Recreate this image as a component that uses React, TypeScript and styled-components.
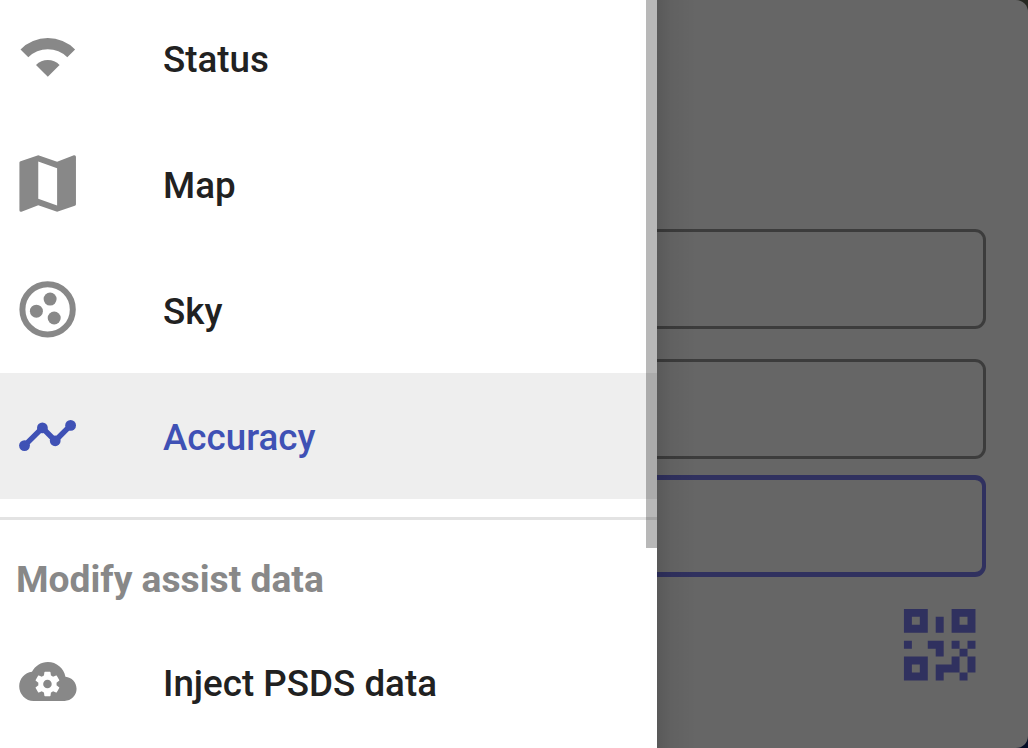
import React from "react";
import styled, { createGlobalStyle } from "styled-components";

const Global = createGlobalStyle`
  * { box-sizing: border-box; }
  body { margin: 0; background: #0a0e22; overflow: hidden; font-family: Roboto, "Liberation Sans", sans-serif; }
`;

const Screen = styled.div`
  position: relative;
  width: 1028px;
  height: 748px;
  overflow: hidden;
  background: linear-gradient(#272822 0 50%, #050d26 50%);
`;

const Page = styled.main`
  display: flex;
  flex-direction: column;
  align-items: flex-end;
  height: 748px;
  padding: 229px 42px 0 0;
  background: #666666;
  border-radius: 0 12px 12px 0;
`;

const Field = styled.div<{ $focused?: boolean; $gap: number }>`
  width: 900px;
  height: ${(p) => (p.$focused ? "102px" : "100px")};
  margin-bottom: ${(p) => p.$gap}px;
  border: solid ${(p) => (p.$focused ? "#30315f" : "#3c3c3c")};
  border-width: ${(p) => (p.$focused ? "5px 4px" : "3px")};
  border-radius: 11px;
`;

const QrButton = styled.div`
  display: flex;
  margin-right: -1px;
  color: #30315f;
`;

const Drawer = styled.aside`
  position: absolute;
  top: 0;
  left: 0;
  width: 657px;
  height: 748px;
  overflow: hidden;
  background: #fff;
`;

const DrawerShadow = styled.div`
  position: absolute;
  top: 0;
  left: 657px;
  width: 40px;
  height: 748px;
  background: linear-gradient(90deg, rgba(0, 0, 0, 0.13), rgba(0, 0, 0, 0.05) 35%, transparent);
`;

const Scrollbar = styled.div`
  position: absolute;
  top: 0;
  right: 0;
  width: 11px;
  height: 548px;
  background: rgba(0, 0, 0, 0.28);
`;

const Menu = styled.nav`
  display: flex;
  flex-direction: column;
  margin-top: -5px;
`;

const Row = styled.div<{ $active?: boolean }>`
  display: flex;
  align-items: center;
  flex: none;
  height: 126px;
  padding-left: 10px;
  gap: 77px;
  color: ${(p) => (p.$active ? "#3f51b5" : "#888888")};
  background: ${(p) => (p.$active ? "#eeeeee" : "transparent")};
`;

const Label = styled.span<{ $active?: boolean }>`
  padding-top: 4px;
  font-size: 36.75px;
  font-weight: 500;
  line-height: 44px;
  white-space: nowrap;
  color: ${(p) => (p.$active ? "#3f51b5" : "#212121")};
`;

const Divider = styled.div`
  height: 3px;
  margin-top: 18px;
  background: #e3e3e3;
`;

const SectionTitle = styled.div`
  height: 99px;
  padding: 37px 0 0 16px;
  font-size: 37.2px;
  font-weight: 700;
  line-height: 44px;
  color: #888888;
`;

const Icon = styled.svg`
  flex: none;
  width: 76px;
  height: 76px;
  fill: currentColor;
`;

const WifiIcon = () => (
  <Icon viewBox="10 20 76 76">
    <path d="M20.5 49.4A38.6 38.6 0 0 1 75.1 49.4L67.3 57.2A27.6 27.6 0 0 0 28.3 57.2Z" />
    <path d="M47.8 76.7L36 64.9A16.7 16.7 0 0 1 59.6 64.9Z" />
  </Icon>
);

const MapIcon = () => (
  <Icon viewBox="0 0.06 24.2 24.2">
    <path d="M15 19L9 16.89V5L15 7.11M20.5 3C20.44 3 20.39 3 20.34 3L15 5.1L9 3L3.36 4.9C3.15 4.97 3 5.15 3 5.38V20.5A.5.5 0 0 0 3.5 21C3.55 21 3.61 21 3.66 20.97L9 18.9L15 21L20.64 19.1C20.85 19 21 18.86 21 18.62V3.5A.5.5 0 0 0 20.5 3Z" />
  </Icon>
);

const SkyIcon = () => (
  <Icon viewBox="10 272 76 76">
    <circle cx="47.6" cy="309.4" r="25.2" fill="none" stroke="currentColor" strokeWidth="6" />
    <circle cx="50.1" cy="299.1" r="6.5" />
    <circle cx="36.4" cy="311.2" r="6.5" />
    <circle cx="54.2" cy="318" r="6.5" />
  </Icon>
);

const ChartIcon = () => (
  <Icon viewBox="10 398 76 76">
    <polyline
      points="24.5,445.6 42.4,427.9 55.2,440.8 70.6,425.4"
      fill="none"
      stroke="currentColor"
      strokeWidth="5.5"
    />
    <circle cx="24.5" cy="445.6" r="5.4" />
    <circle cx="42.4" cy="427.9" r="5.4" />
    <circle cx="55.2" cy="440.8" r="5.4" />
    <circle cx="70.6" cy="425.4" r="5.4" />
  </Icon>
);

const CloudIcon = () => (
  <Icon viewBox="10 644 76 76">
    <path
      transform="translate(19.2 652.3) scale(2.39 2.43)"
      d="M19.35 10.03C18.67 6.59 15.64 4 12 4C9.11 4 6.6 5.64 5.35 8.03C2.34 8.36 0 10.9 0 14A6 6 0 0 0 6 20H19A5 5 0 0 0 24 15C24 12.36 21.95 10.22 19.35 10.03Z"
    />
    <path
      fill="#fff"
      transform="translate(32.8 669.4) scale(1.22)"
      d="M12 15.5A3.5 3.5 0 0 1 8.5 12A3.5 3.5 0 0 1 12 8.5A3.5 3.5 0 0 1 15.5 12A3.5 3.5 0 0 1 12 15.5M19.43 12.97C19.47 12.65 19.5 12.33 19.5 12C19.5 11.67 19.47 11.34 19.43 11L21.54 9.37C21.73 9.22 21.78 8.95 21.66 8.73L19.66 5.27C19.54 5.05 19.27 4.96 19.05 5.05L16.56 6.05C16.04 5.66 15.5 5.32 14.87 5.07L14.5 2.42C14.46 2.18 14.25 2 14 2H10C9.75 2 9.54 2.18 9.5 2.42L9.13 5.07C8.5 5.32 7.96 5.66 7.44 6.05L4.95 5.05C4.73 4.96 4.46 5.05 4.34 5.27L2.34 8.73C2.21 8.95 2.27 9.22 2.46 9.37L4.57 11C4.53 11.34 4.5 11.67 4.5 12C4.5 12.33 4.53 12.65 4.57 12.97L2.46 14.63C2.27 14.78 2.21 15.05 2.34 15.27L4.34 18.73C4.46 18.95 4.73 19.03 4.95 18.95L7.44 17.94C7.96 18.34 8.5 18.68 9.13 18.93L9.5 21.58C9.54 21.82 9.75 22 10 22H14C14.25 22 14.46 21.82 14.5 21.58L14.87 18.93C15.5 18.67 16.04 18.34 16.56 17.94L19.05 18.95C19.27 19.03 19.54 18.95 19.66 18.73L21.66 15.27C21.78 15.05 21.73 14.78 21.54 14.63L19.43 12.97Z"
    />
  </Icon>
);

const QrIcon = () => (
  <svg width="95.4" height="95.4" viewBox="0 0 24 24" fill="currentColor">
    <path d="M3 11H5V13H3V11M11 5H13V9H11V5M9 11H13V15H11V13H9V11M15 11H17V13H19V11H21V13H19V15H21V19H19V21H17V19H13V21H11V17H15V15H17V13H15V11M19 19V15H17V19H19M15 3H21V9H15V3M17 5V7H19V5H17M3 3H9V9H3V3M5 5V7H7V5H5M3 15H9V21H3V15M5 17V19H7V17H5Z" />
  </svg>
);

export default function App() {
  return (
    <Screen>
      <Global />
      <Page>
        <Field $gap={30} />
        <Field $gap={16} />
        <Field $focused $gap={19.6} />
        <QrButton>
          <QrIcon />
        </QrButton>
      </Page>
      <DrawerShadow />
      <Drawer>
        <Menu>
          <Row>
            <WifiIcon />
            <Label>Status</Label>
          </Row>
          <Row>
            <MapIcon />
            <Label>Map</Label>
          </Row>
          <Row>
            <SkyIcon />
            <Label>Sky</Label>
          </Row>
          <Row $active>
            <ChartIcon />
            <Label $active>Accuracy</Label>
          </Row>
          <Divider />
          <SectionTitle>Modify assist data</SectionTitle>
          <Row>
            <CloudIcon />
            <Label>Inject PSDS data</Label>
          </Row>
        </Menu>
        <Scrollbar />
      </Drawer>
    </Screen>
  );
}
